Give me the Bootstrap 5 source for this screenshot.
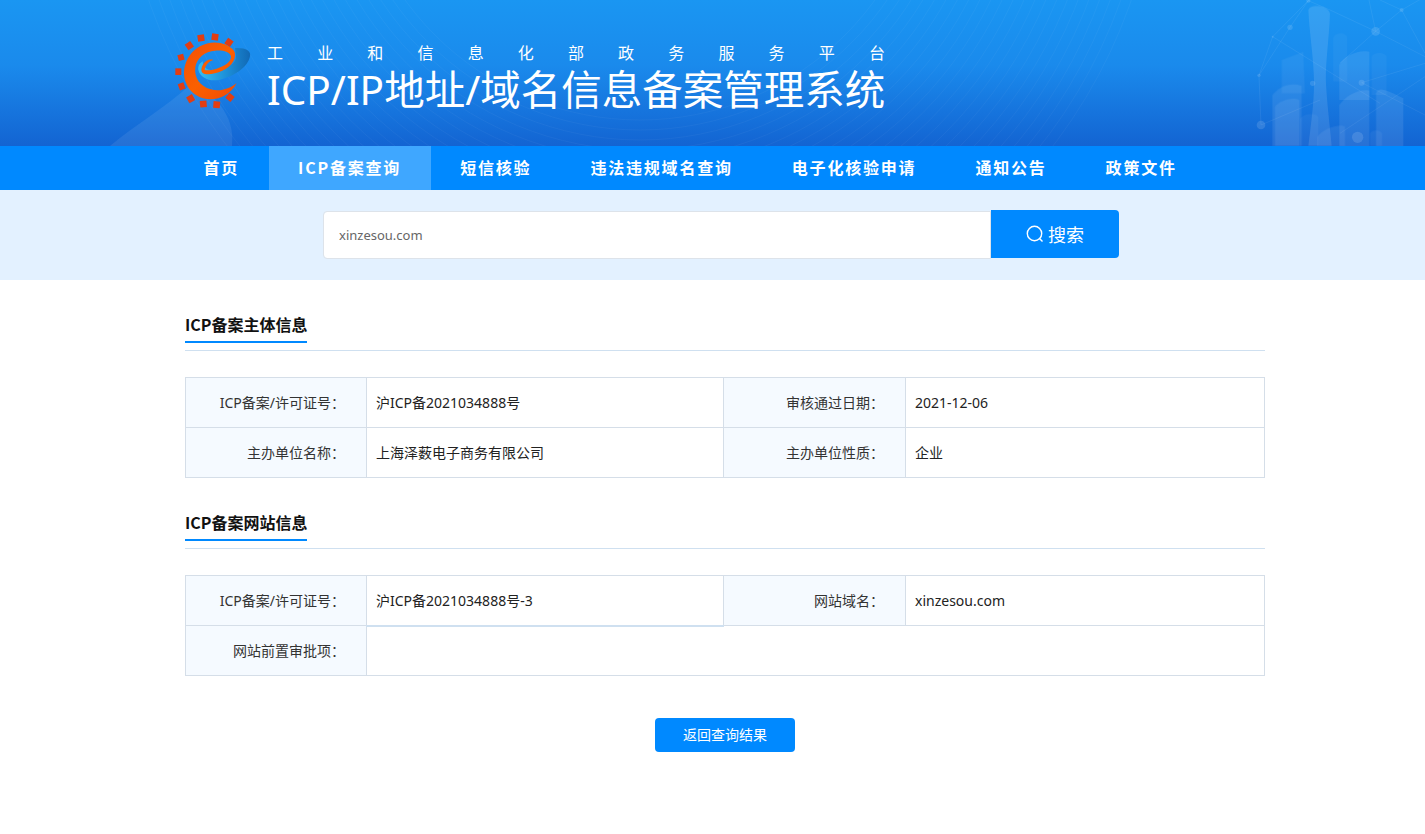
<!DOCTYPE html>
<html lang="zh-CN">
<head>
<meta charset="utf-8">
<title>ICP/IP地址/域名信息备案管理系统</title>
<link href="https://cdn.jsdelivr.net/npm/bootstrap@5.3.0/dist/css/bootstrap.min.css" rel="stylesheet">
<style>
body{font-family:"Noto Sans","Noto Sans CJK SC",sans-serif;background:#fff;color:#222;font-size:14px;}
.site-head{height:146px;background:linear-gradient(180deg,#1a96f2 0%,#1a8aec 45%,#1364d2 100%);overflow:hidden;padding-left:170px;}
.head-art{position:absolute;left:0;top:0;width:1425px;height:146px;}
.head-logo{width:85px;height:85px;margin-top:28px;flex:none;}
.head-text{margin-left:12px;color:#fff;margin-top:41px;}
.head-sub{font-size:16px;line-height:24px;display:flex;justify-content:space-between;width:618px;}
.head-title{font-size:40.5px;line-height:52px;white-space:nowrap;margin-top:-1px;}
.main-nav{height:44px;background:#0089ff;padding-left:174px;}
.main-nav .nav-link{color:#fff;font-family:"Noto Sans CJK SC",sans-serif;font-weight:700;font-size:16px;letter-spacing:1.8px;height:44px;line-height:42px;padding:0 29.5px;white-space:nowrap;}
.main-nav .nav-link.active{background:#3fa7ff;color:#fff;}
.search-band{height:90px;background:#e3f1ff;padding:20px 0 0 323px;}
.search-input.form-control{width:668px;height:48px;margin-top:1px;border:1px solid #dde3ea;border-radius:4px 0 0 4px;font-size:13px;color:#666;padding:0 15px;box-shadow:none;}
.search-btn.btn{width:128px;height:48px;background:#0089ff;border:0;border-radius:0 4px 4px 0;color:#fff;font-size:18px;padding:0;font-family:"Noto Sans CJK SC",sans-serif;}
.page-body{width:1080px;margin-left:185px;}
.sec-head{border-bottom:1px solid #cfe0f0;height:71px;padding-top:32px;}
.sec-name{display:inline-block;font-family:"Noto Sans CJK SC",sans-serif;font-weight:700;font-size:16px;line-height:24px;color:#111;height:31px;border-bottom:2px solid #0089ff;}
.info-table.table{table-layout:fixed;width:1080px;margin:26px 0 0;border-color:#d5dee8;color:#222;}
.info-table.table td{height:50px;padding:0 9px;vertical-align:middle;font-size:14px;border-color:#d5dee8;background:#fff;box-shadow:none;}
.info-table.table td.cell-key{background:#f5faff;text-align:right;padding:0 21px 0 0;color:#333;}
.info-table.table td.cell-line{border-bottom:2px solid #cfe0f0;}
.col-key-a{width:181px;}.col-val-a{width:357px;}.col-key-b{width:182px;}
.back-wrap{margin-top:42px;}
.back-btn.btn{width:140px;height:34px;background:#0089ff;border:0;border-radius:4px;color:#fff;font-size:14px;line-height:32px;padding:0;font-family:"Noto Sans CJK SC",sans-serif;}
.wave-arcs{fill:none;stroke:#fff;stroke-width:1;opacity:.035;}
.net-lines{fill:none;stroke:#fff;stroke-width:2;opacity:.1;}
.tower-set{fill:#fff;opacity:.72;}
</style>
</head>
<body>
<header class="site-head position-relative d-flex">
  <svg class="head-art" viewBox="0 0 1425 146" aria-hidden="true">
    <path d="M110 146C135 125 165 108 190 85C212 90 236 115 232 146Z" fill="#ffffff" opacity=".08"/>
    <g class="wave-arcs">
      <circle cx="640" cy="-170" r="520"/><circle cx="640" cy="-170" r="510"/><circle cx="640" cy="-170" r="500"/><circle cx="640" cy="-170" r="490"/><circle cx="640" cy="-170" r="480"/><circle cx="640" cy="-170" r="470"/><circle cx="640" cy="-170" r="460"/><circle cx="640" cy="-170" r="450"/><circle cx="640" cy="-170" r="440"/><circle cx="640" cy="-170" r="430"/><circle cx="640" cy="-170" r="420"/><circle cx="640" cy="-170" r="410"/><circle cx="640" cy="-170" r="400"/><circle cx="640" cy="-170" r="390"/><circle cx="640" cy="-170" r="380"/><circle cx="640" cy="-170" r="370"/><circle cx="640" cy="-170" r="360"/><circle cx="640" cy="-170" r="350"/><circle cx="640" cy="-170" r="340"/><circle cx="640" cy="-170" r="330"/><circle cx="640" cy="-170" r="320"/><circle cx="640" cy="-170" r="310"/><circle cx="640" cy="-170" r="300"/><circle cx="640" cy="-170" r="290"/>
    </g>
    <g transform="translate(1240 0) scale(.3333)">
      <path class="net-lines" d="M205 2L98 110L57 226L63 375M150 82L205 2M98 110L420 310M57 226L150 82M205 2L270 30L407 94L555 170M407 94L485 30L555 -10M485 30L420 0M485 30L555 160M407 94L300 190M365 248L555 190M387 0L407 94M205 2L300 -30M63 375L240 300M365 248L555 345M300 400L555 230"/>
      <g fill="#fff" opacity=".12">
        <circle cx="205" cy="2" r="6"/><circle cx="150" cy="82" r="8"/><circle cx="98" cy="110" r="3"/><circle cx="57" cy="226" r="5"/><circle cx="63" cy="375" r="13"/><circle cx="218" cy="250" r="8"/><circle cx="365" cy="248" r="9"/><circle cx="407" cy="94" r="13"/><circle cx="485" cy="30" r="6"/><circle cx="353" cy="412" r="17"/>
      </g>
      <g class="tower-set">
        <path d="M280 112C285 96 318 96 322 112V245H280Z" opacity=".06"/>
        <path d="M395 170C400 155 435 155 440 170V285H395Z" opacity=".06"/>
        <path d="M125 180L190 155L195 280H125Z" opacity=".08"/>
        <path d="M205 30C210 10 265 15 270 40C268 110 255 200 258 250C262 320 270 380 275 438H205C212 380 222 310 222 250C222 180 208 100 205 30Z" opacity=".16"/>
        <path d="M298 195C310 170 350 148 388 155V300H298Z" opacity=".12"/>
        <path d="M97 285C115 262 150 245 185 258V438H97Z" opacity=".11"/>
        <path d="M105 320C120 300 160 290 178 300V438H105Z" opacity=".11"/>
        <path d="M180 355C195 338 225 338 235 350V438H180Z" opacity=".06"/>
        <path d="M298 315C315 290 355 265 388 272V438H298Z" opacity=".12"/>
        <path d="M408 280C415 258 440 270 490 295V438H408Z" opacity=".13"/>
        <path d="M232 410C250 385 300 370 315 380V438H232Z" opacity=".1"/>
        <path d="M390 400C395 388 420 388 426 400V438H390Z" opacity=".08"/>
      </g>
    </g>
  </svg>
  <svg class="head-logo position-relative" viewBox="0 0 255 255" role="img" aria-label="logo">
    <defs>
      <linearGradient id="swooshFill" x1="0" y1="0" x2="1" y2="0"><stop offset="0" stop-color="#35bdf2"/><stop offset=".55" stop-color="#1c8fd8"/><stop offset="1" stop-color="#1168b4"/></linearGradient>
      <linearGradient id="emberFill" x1="0" y1="0" x2="1" y2="1"><stop offset="0" stop-color="#f24f08"/><stop offset=".5" stop-color="#fb6000"/><stop offset="1" stop-color="#f04a06"/></linearGradient>
    </defs>
    <g fill="#e23d12">
      <rect x="83" y="20" width="20" height="20" transform="rotate(-8 93 30)"/>
      <rect x="125" y="17" width="20" height="20" transform="rotate(8 135 27)"/>
      <rect x="167" y="33" width="20" height="20" transform="rotate(35 177 43)"/>
      <rect x="48" y="43" width="20" height="20" transform="rotate(-35 58 53)"/>
      <rect x="24" y="79" width="18" height="18" transform="rotate(-15 33 88)"/>
      <rect x="16" y="121" width="18" height="20"/>
      <rect x="26" y="165" width="18" height="20" transform="rotate(-20 35 175)"/>
      <rect x="52" y="202" width="20" height="20" transform="rotate(-30 62 212)"/>
      <rect x="90" y="218" width="20" height="20" transform="rotate(-5 100 228)"/>
      <rect x="130" y="220" width="20" height="20" transform="rotate(5 140 230)"/>
      <rect x="170" y="198" width="20" height="20" transform="rotate(40 180 208)"/>
    </g>
    <path d="M195 60C225 58 245 68 240 85C235 115 195 145 150 155C120 162 90 150 85 125C84 112 90 105 98 100C100 125 120 130 145 126C175 120 200 105 198 85Z" fill="url(#swooshFill)"/>
    <path d="M192 68C170 42 125 35 90 55C50 78 32 125 48 165C65 210 120 225 160 205C178 195 192 182 200 165C180 182 150 192 122 184C90 175 72 150 76 118C80 90 105 70 135 68C160 66 180 72 183 85C185 100 165 115 140 122C125 126 112 128 104 126C105 112 118 98 130 96C118 92 105 98 98 112C92 124 92 135 105 138C130 142 175 128 190 100C196 88 197 76 192 68Z" fill="url(#emberFill)"/>
  </svg>
  <div class="head-text position-relative">
    <div class="head-sub"><span>工</span><span>业</span><span>和</span><span>信</span><span>息</span><span>化</span><span>部</span><span>政</span><span>务</span><span>服</span><span>务</span><span>平</span><span>台</span></div>
    <div class="head-title">ICP/IP地址/域名信息备案管理系统</div>
  </div>
</header>
<nav class="main-nav">
  <ul class="nav">
    <li class="nav-item"><a class="nav-link" href="#">首页</a></li>
    <li class="nav-item"><a class="nav-link active" href="#">ICP备案查询</a></li>
    <li class="nav-item"><a class="nav-link" href="#">短信核验</a></li>
    <li class="nav-item"><a class="nav-link" href="#">违法违规域名查询</a></li>
    <li class="nav-item"><a class="nav-link" href="#">电子化核验申请</a></li>
    <li class="nav-item"><a class="nav-link" href="#">通知公告</a></li>
    <li class="nav-item"><a class="nav-link" href="#">政策文件</a></li>
  </ul>
</nav>
<section class="search-band d-flex align-items-start">
  <input class="form-control search-input" type="text" value="xinzesou.com" aria-label="搜索">
  <button class="btn search-btn d-flex align-items-center justify-content-center gap-1" type="button">
    <svg width="18" height="18" viewBox="0 0 18 18" fill="none" stroke="#fff" stroke-width="1.400" aria-hidden="true"><circle cx="8.500" cy="8.500" r="7.200"/><path d="M13.500 13.500L16.500 16.500"/></svg>
    <span>搜索</span>
  </button>
</section>
<main class="page-body">
  <div class="sec-head"><span class="sec-name">ICP备案主体信息</span></div>
  <table class="table table-bordered info-table">
    <colgroup><col class="col-key-a"><col class="col-val-a"><col class="col-key-b"><col></colgroup>
    <tbody>
      <tr><td class="cell-key">ICP备案/许可证号：</td><td>沪ICP备2021034888号</td><td class="cell-key">审核通过日期：</td><td>2021-12-06</td></tr>
      <tr><td class="cell-key">主办单位名称：</td><td>上海泽薮电子商务有限公司</td><td class="cell-key">主办单位性质：</td><td>企业</td></tr>
    </tbody>
  </table>
  <div class="sec-head"><span class="sec-name">ICP备案网站信息</span></div>
  <table class="table table-bordered info-table">
    <colgroup><col class="col-key-a"><col class="col-val-a"><col class="col-key-b"><col></colgroup>
    <tbody>
      <tr><td class="cell-key">ICP备案/许可证号：</td><td class="cell-line">沪ICP备2021034888号-3</td><td class="cell-key">网站域名：</td><td>xinzesou.com</td></tr>
      <tr><td class="cell-key">网站前置审批项：</td><td colspan="3"></td></tr>
    </tbody>
  </table>
  <div class="back-wrap d-flex justify-content-center"><a class="btn back-btn" href="#">返回查询结果</a></div>
</main>
<script src="https://cdn.jsdelivr.net/npm/bootstrap@5.3.0/dist/js/bootstrap.bundle.min.js"></script>
</body>
</html>
